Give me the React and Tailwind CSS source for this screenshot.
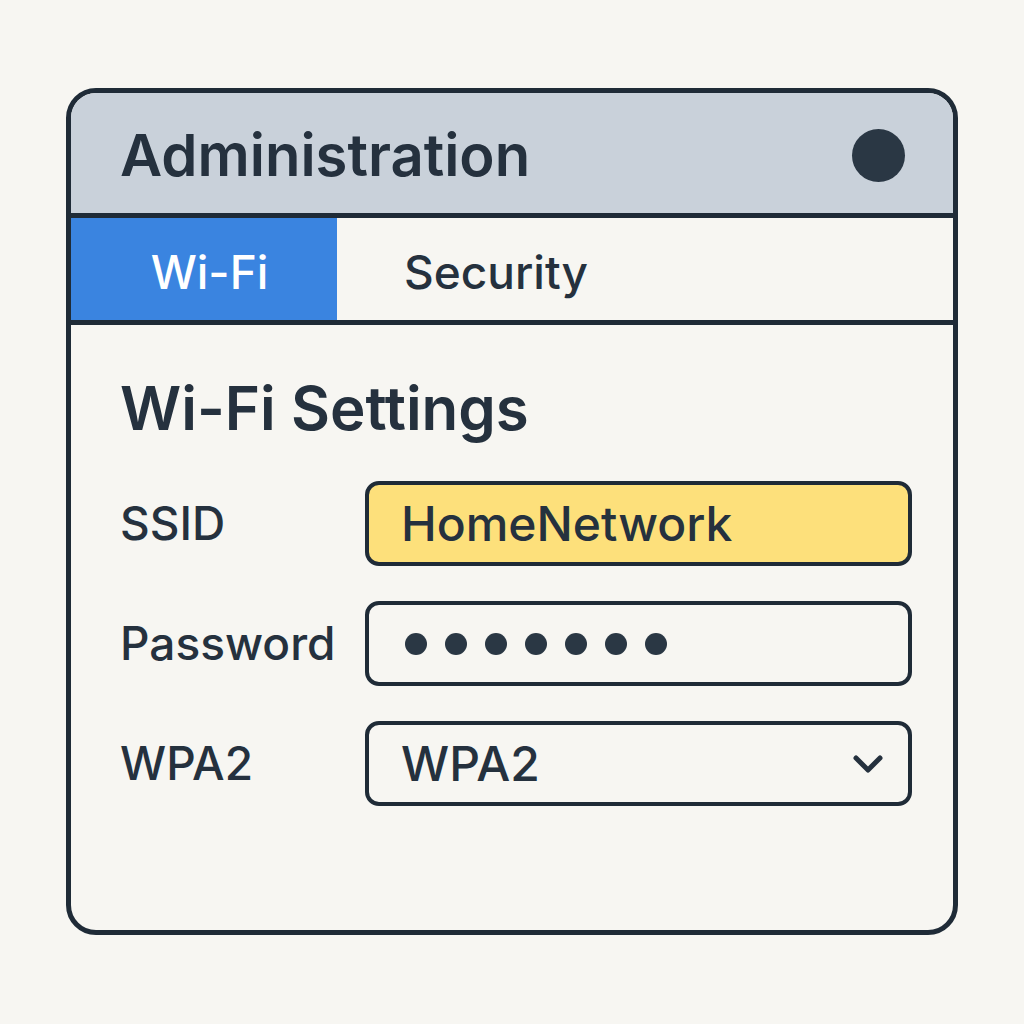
import React from 'react';

function Field({ label, children, yellow }) {
  return (
    <div className="flex items-center">
      <div className="w-[245px] shrink-0 text-[46px] font-medium text-[#25313e]">{label}</div>
      <div className={`flex h-[85px] w-[547px] shrink-0 items-center rounded-[14px] border-[4px] border-[#1f2b37] px-[32px] ${yellow ? 'bg-[#fde07b]' : 'bg-[#f7f6f2]'}`}>
        {children}
      </div>
    </div>
  );
}

export default function App() {
  return (
    <div className="h-screen w-full bg-[#f7f6f2] pl-[66px] pt-[88px]" style={{ fontFamily: 'Inter, "Noto Sans", sans-serif' }}>
      <div className="flex h-[847px] w-[892px] flex-col overflow-hidden rounded-[30px] border-[5px] border-[#1f2b37] bg-[#f7f6f2]">
        <div className="flex h-[125px] shrink-0 items-center justify-between border-b-[5px] border-[#1f2b37] bg-[#c9d1da] pl-[49px] pr-[48px] pt-[4px]">
          <h1 className="text-[58px] font-semibold text-[#25313e]">Administration</h1>
          <div className="h-[53px] w-[53px] rounded-full bg-[#2a3744]" />
        </div>
        <div className="flex h-[107px] shrink-0 border-b-[5px] border-[#1f2b37]">
          <div className="flex w-[266px] items-center justify-center bg-[#3a84e0] pl-[11px] pt-[6px] text-[46px] font-medium text-white">Wi-Fi</div>
          <div className="flex items-center pl-[67px] pt-[6px] text-[46px] font-medium text-[#25313e]">Security</div>
        </div>
        <div className="pl-[49px] pt-[53px]">
          <h2 className="text-[60px] font-semibold leading-none text-[#25313e]">Wi-Fi Settings</h2>
          <div className="mt-[43px] flex flex-col gap-[35px]">
            <Field label="SSID" yellow>
              <span className="text-[48px] font-medium text-[#25313e]">HomeNetwork</span>
            </Field>
            <Field label="Password">
              <div className="flex gap-[18px] pl-[4px]">
                {[0, 1, 2, 3, 4, 5, 6].map(i => (
                  <span key={i} className="h-[22px] w-[22px] rounded-full bg-[#2a3744]" />
                ))}
              </div>
            </Field>
            <Field label="WPA2">
              <div className="flex w-full items-center justify-between">
                <span className="text-[48px] font-medium text-[#25313e]">WPA2</span>
                <svg width="32" height="22" viewBox="0 0 32 22" fill="none" stroke="#25313e" strokeWidth="5" strokeLinecap="round" strokeLinejoin="round" className="-mr-[8px]">
                  <path d="M4 5 L16 17 L28 5" />
                </svg>
              </div>
            </Field>
          </div>
        </div>
      </div>
    </div>
  );
}
